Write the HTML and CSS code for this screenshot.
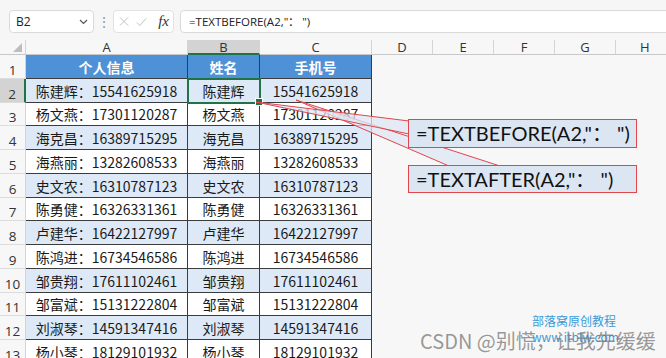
FILE: index.html
```html
<!DOCTYPE html>
<html lang="zh-CN">
<head>
  <meta charset="UTF-8">
  <meta name="viewport" content="width=device-width, initial-scale=1.0">
  <title>TEXTBEFORE 与 TEXTAFTER</title>
  <link rel="stylesheet" href="styles.css">
</head>
<body>

<div class="app">
  <div class="bar">
    <div class="namebox">
      <span>B2</span>
      <svg width="9" height="6" viewBox="0 0 9 6"><path d="M1 1 L4.5 4.5 L8 1" fill="none" stroke="#555" stroke-width="1.2"/></svg>
    </div>
    <span class="dots">⋮</span>
    <div class="fxbox">
      <svg width="11" height="11" viewBox="0 0 11 11"><path d="M1 1 L10 10 M10 1 L1 10" stroke="#bcbcbc" stroke-width="1"/></svg>
      <svg width="12" height="10" viewBox="0 0 12 10"><path d="M1 5.5 L4.2 8.8 L11 1" fill="none" stroke="#bcbcbc" stroke-width="1"/></svg>
      <i class="fx">fx</i>
    </div>
    <div class="formula">=TEXTBEFORE(A2,"：  ")</div>
  </div>

  <div class="sheet">
    <div class="corner"><span class="tri"></span></div>
    <div class="ch">A</div>
    <div class="ch sel">B</div>
    <div class="ch">C</div>
    <div class="ch">D</div>
    <div class="ch">E</div>
    <div class="ch">F</div>
    <div class="ch">G</div>
    <div class="ch last">H</div>

    <div class="row head">
      <div class="rh">1</div><div class="c">个人信息</div><div class="c">姓名</div><div class="c">手机号</div><div class="rest"></div>
    </div>
    <div class="row alt">
      <div class="rh sel">2</div><div class="c">陈建辉：15541625918</div><div class="c active">陈建辉</div><div class="c">15541625918</div><div class="rest"></div>
    </div>
    <div class="row">
      <div class="rh">3</div><div class="c">杨文燕：17301120287</div><div class="c">杨文燕</div><div class="c">17301120287</div><div class="rest"></div>
    </div>
    <div class="row alt">
      <div class="rh">4</div><div class="c">海克昌：16389715295</div><div class="c">海克昌</div><div class="c">16389715295</div><div class="rest"></div>
    </div>
    <div class="row">
      <div class="rh">5</div><div class="c">海燕丽：13282608533</div><div class="c">海燕丽</div><div class="c">13282608533</div><div class="rest"></div>
    </div>
    <div class="row alt">
      <div class="rh">6</div><div class="c">史文农：16310787123</div><div class="c">史文农</div><div class="c">16310787123</div><div class="rest"></div>
    </div>
    <div class="row">
      <div class="rh">7</div><div class="c">陈勇健：16326331361</div><div class="c">陈勇健</div><div class="c">16326331361</div><div class="rest"></div>
    </div>
    <div class="row alt">
      <div class="rh">8</div><div class="c">卢建华：16422127997</div><div class="c">卢建华</div><div class="c">16422127997</div><div class="rest"></div>
    </div>
    <div class="row">
      <div class="rh">9</div><div class="c">陈鸿进：16734546586</div><div class="c">陈鸿进</div><div class="c">16734546586</div><div class="rest"></div>
    </div>
    <div class="row alt">
      <div class="rh">10</div><div class="c">邹贵翔：17611102461</div><div class="c">邹贵翔</div><div class="c">17611102461</div><div class="rest"></div>
    </div>
    <div class="row">
      <div class="rh">11</div><div class="c">邹富斌：15131222804</div><div class="c">邹富斌</div><div class="c">15131222804</div><div class="rest"></div>
    </div>
    <div class="row alt">
      <div class="rh">12</div><div class="c">刘淑琴：14591347416</div><div class="c">刘淑琴</div><div class="c">14591347416</div><div class="rest"></div>
    </div>
    <div class="row">
      <div class="rh">13</div><div class="c">杨小琴：18129101932</div><div class="c">杨小琴</div><div class="c">18129101932</div><div class="rest"></div>
    </div>
  </div>

  <!-- callout pointers -->
  <svg class="wedges" width="666" height="358" viewBox="0 0 666 358">
    <polygon points="296,100 449,166 500,166" />
    <polygon points="256,102 409,121 409,134" />
  </svg>
  <div class="callout one">=TEXTBEFORE(A2,"：  ")</div>
  <div class="callout two">=TEXTAFTER(A2,"：  ")</div>

  <div class="mark-blue">部落窝原创教程<br>www.itblw.com</div>
  <div class="mark">CSDN @别慌，让我先缓缓</div>
</div>

</body>
</html>
```

FILE: styles.css
```css
* {
  box-sizing: border-box;
}
html, body {
  margin: 0;
  padding: 0;
}
body {
  width: 666px;
  height: 358px;
  overflow: hidden;
  background: #f7f7f7;
  font-family: "Noto Sans CJK SC", sans-serif;
  color: #222;
}
.app {
  position: relative;
  width: 666px;
  height: 358px;
  overflow: hidden;
}

/* formula bar */
.bar {
  height: 40px;
  display: flex;
  align-items: flex-start;
  padding: 10px 0 0 9px;
  background: #f6f6f6;
}
.namebox {
  width: 85px;
  height: 23px;
  background: #fff;
  border: 1px solid #dadada;
  border-radius: 4px;
  display: flex;
  align-items: center;
  justify-content: space-between;
  padding: 0 5px 0 6px;
  font-family: "Open Sans", sans-serif;
  font-size: 12px;
  color: #222;
}
.dots {
  width: 19px;
  text-align: center;
  color: #9a9a9a;
  font-size: 14px;
  line-height: 23px;
}
.fxbox {
  width: 61px;
  height: 23px;
  background: #fff;
  border: 1px solid #e2e2e2;
  border-radius: 4px;
  display: flex;
  align-items: center;
  gap: 7px;
  padding: 0 4px 0 5px;
}
.fx {
  font-family: "Liberation Serif", serif;
  font-size: 15px;
  color: #333;
  margin-left: 4px;
}
.formula {
  flex: 1;
  margin: 0 -10px 0 6px;
  height: 23px;
  background: #fff;
  border: 1px solid #dadada;
  border-radius: 4px;
  padding-left: 8px;
  font-family: "Open Sans", sans-serif;
  font-size: 11.5px;
  line-height: 21px;
  color: #222;
}

/* grid */
.sheet {
  display: grid;
  grid-template-columns: 26px 162px 72px 112px 61px 61px 61px 61px 1fr;
  grid-template-rows: 15px 24px 24px 23px 24px 24px 24px 23px 24px 24px 24px 23px 24px 24px;
}
.row {
  display: contents;
}
.corner {
  position: relative;
  background: #f7f7f7;
  border-right: 1px solid #d4d4d4;
  border-bottom: 1px solid #c8c8c8;
}
.tri {
  position: absolute;
  right: 3px;
  bottom: 2px;
  width: 0;
  height: 0;
  border-left: 9px solid transparent;
  border-bottom: 9px solid #bdbdbd;
}
.ch {
  background: #f7f7f7;
  border-right: 1px solid #d4d4d4;
  border-bottom: 1px solid #c8c8c8;
  font-family: "Open Sans", sans-serif;
  font-size: 13px;
  line-height: 15px;
  color: #333;
  text-align: center;
}
.ch.sel {
  background: #d3d3d3;
  border-bottom: 2px solid #217346;
}
.ch.last {
  text-align: left;
  padding-left: 24px;
  border-right: none;
}
.rh {
  background: #f7f7f7;
  border-right: 1px solid #d4d4d4;
  border-bottom: 1px solid #dcdcdc;
  font-family: "Open Sans", sans-serif;
  font-size: 13.5px;
  color: #333;
  display: flex;
  align-items: flex-end;
  justify-content: center;
  padding-bottom: 1px;
  line-height: 1;
}
.rh.sel {
  background: #d3d3d3;
  border-right: 2px solid #217346;
}
.c {
  background: #fff;
  border-right: 1px solid #3c3c3c;
  border-bottom: 1px solid #3c3c3c;
  font-size: 14px;
  display: flex;
  align-items: center;
  justify-content: center;
  color: #1a1a1a;
  white-space: nowrap;
}
.row.alt .c {
  background: #dde9f6;
}
.row.head .c {
  background: #4e91d6;
  color: #fff;
  font-weight: bold;
}
.rest {
  grid-column: 5 / -1;
  background: #f7f7f7;
}
.c.active {
  position: relative;
  outline: 2px solid #217346;
  outline-offset: -1px;
}
.c.active::after {
  content: "";
  position: absolute;
  right: -4px;
  bottom: -4px;
  width: 6px;
  height: 6px;
  background: #217346;
  border: 1px solid #fff;
}

/* callouts */
.wedges {
  position: absolute;
  left: 0;
  top: 0;
  pointer-events: none;
}
.wedges polygon {
  fill: rgba(221, 231, 243, 0.75);
  stroke: #e0464c;
  stroke-width: 1;
}
.callout {
  position: absolute;
  left: 408px;
  width: 229px;
  height: 29px;
  background: #dce6f2;
  border: 1px solid #e0464c;
  padding-left: 7px;
  font-family: "Lato", sans-serif;
  font-size: 20px;
  line-height: 27px;
  color: #111;
  white-space: nowrap;
}
.callout.one {
  top: 119px;
}
.callout.two {
  top: 165px;
  height: 28px;
  line-height: 26px;
}

/* watermarks */
.mark-blue {
  position: absolute;
  left: 532px;
  top: 313px;
  font-size: 12px;
  line-height: 16px;
  color: #3d9ad8;
}
.mark {
  position: absolute;
  left: 420px;
  top: 326px;
  font-size: 20px;
  color: rgba(120, 120, 120, 0.75);
  white-space: nowrap;
}
```
